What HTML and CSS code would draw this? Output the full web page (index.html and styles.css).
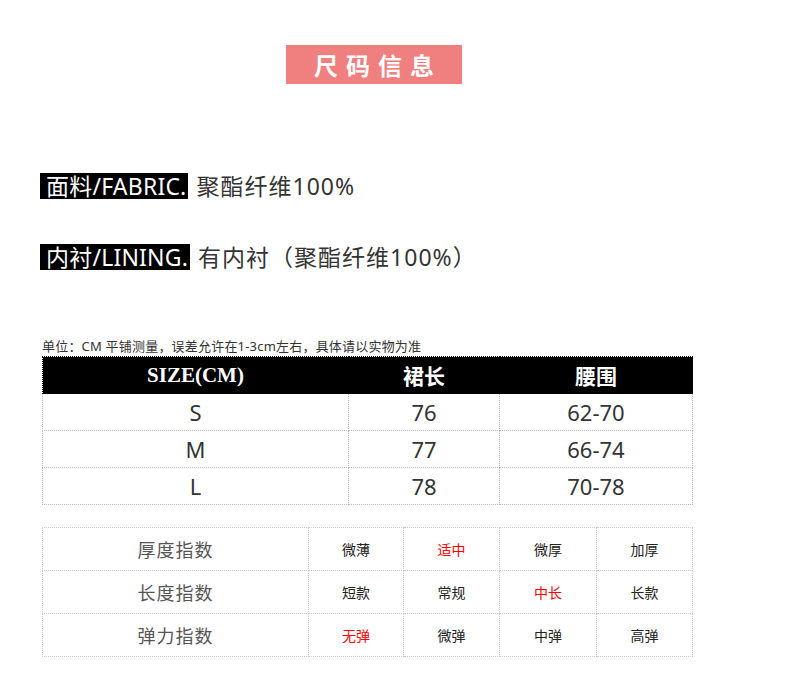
FILE: index.html
```html
<!DOCTYPE html>
<html>
<head>
<meta charset="utf-8">
<link rel="stylesheet" href="styles.css">
</head>
<body>
<div class="page">
  <div class="title-wrap"><div class="title">尺码信息</div></div>
  <div class="spec spec-fabric"><span class="tag">面料/FABRIC.</span><span class="val">聚酯纤维100%</span></div>
  <div class="spec spec-lining"><span class="tag">内衬/LINING.</span><span class="val">有内衬（聚酯纤维100%）</span></div>
  <div class="note">单位：CM 平铺测量，误差允许在1-3cm左右，具体请以实物为准</div>
  <table class="size">
    <colgroup><col class="c1"><col class="c2"><col class="c3"></colgroup>
    <thead><tr><th>SIZE(CM)</th><th>裙长</th><th>腰围</th></tr></thead>
    <tbody>
      <tr><td>S</td><td>76</td><td>62-70</td></tr>
      <tr><td>M</td><td>77</td><td>66-74</td></tr>
      <tr><td>L</td><td>78</td><td>70-78</td></tr>
    </tbody>
  </table>
  <table class="index">
    <colgroup><col class="k1"><col class="k2"><col class="k3"><col class="k4"><col class="k5"></colgroup>
    <tbody>
      <tr><th>厚度指数</th><td>微薄</td><td class="on">适中</td><td>微厚</td><td>加厚</td></tr>
      <tr><th>长度指数</th><td>短款</td><td>常规</td><td class="on">中长</td><td>长款</td></tr>
      <tr><th>弹力指数</th><td class="on">无弹</td><td>微弹</td><td>中弹</td><td>高弹</td></tr>
    </tbody>
  </table>
</div>
</body>
</html>
```

FILE: styles.css
```css
html, body { margin: 0; padding: 0; background: #fff; }
body { font-family: "Noto Sans", "Noto Sans CJK SC", sans-serif; color: #333; }
.page { width: 790px; height: 695px; overflow: hidden; padding-top: 45px; box-sizing: border-box; }
.title-wrap { display: flex; padding-left: 286px; }
.title {
  width: 176px; height: 39px; background: #f08080; color: #fff;
  font-family: "Noto Sans CJK SC", sans-serif;
  font-size: 24px; line-height: 39px; text-align: center; letter-spacing: 8px; text-indent: 8px;
  font-weight: 700;
}
.spec { display: flex; align-items: center; padding-left: 40px; height: 26px; }
.spec-fabric { margin-top: 89px; }
.spec-lining { margin-top: 45px; }
.tag {
  background: #000; color: #fff; font-size: 23px; height: 26px; line-height: 26px;
  padding: 0 2px 0 6px; white-space: nowrap; letter-spacing: 0.2px;
}
.val { font-size: 23px; color: #333; margin-left: 8px; line-height: 26px; white-space: nowrap; letter-spacing: 1px; }
.note { margin-top: 68px; padding-left: 42px; font-size: 13px; line-height: 16px; color: #333; height: 17px; letter-spacing: 0.2px; white-space: nowrap; }
table { border-collapse: collapse; margin-left: 42px; table-layout: fixed; }
.size { width: 650px; margin-top: 1px; }
.size .c1 { width: 306px; }
.size .c2 { width: 151px; }
.size .c3 { width: 193px; }
.size th, .size td { border: 1px dotted #bbb; text-align: center; padding: 0; }
.size th {
  background: #000; color: #fff; height: 36px; font-weight: bold;
  font-family: "Liberation Serif", "Noto Sans CJK SC", serif; font-size: 21px;
  border-color: #000; border-left-color: #ccc;
}
.size th:first-child { border-left-color: #000; }
.size td { height: 36px; font-size: 22px; color: #333; }
.index { width: 650px; margin-top: 22px; }
.index .k1 { width: 266px; }
.index .k2 { width: 95px; }
.index .k3 { width: 96px; }
.index .k4 { width: 97px; }
.index .k5 { width: 96px; }
.index th, .index td { border: 1px dotted #ccc; text-align: center; padding: 0; height: 42px; font-family: "Noto Sans CJK SC", sans-serif; }
.index th { font-weight: normal; font-size: 18px; color: #555; letter-spacing: 1px; }
.index td { font-size: 14px; color: #222; }
.index td.on { color: #f00; }
```
